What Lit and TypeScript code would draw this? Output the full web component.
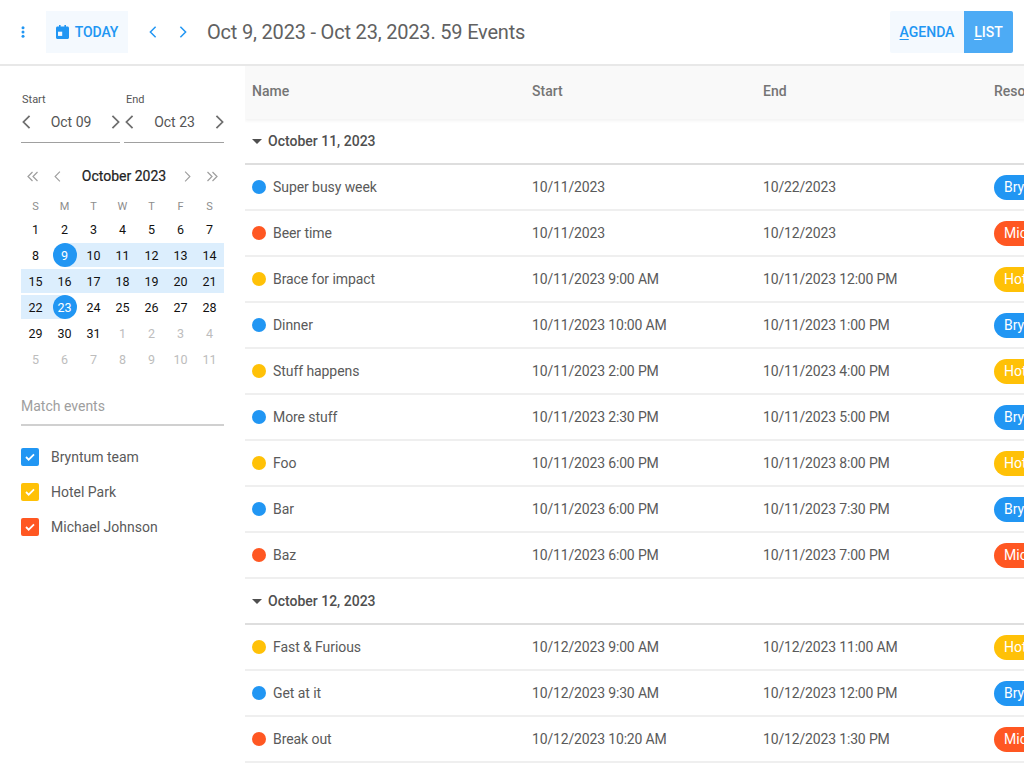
import { LitElement, html, css, unsafeCSS } from 'lit';
import { customElement } from 'lit/decorators.js';

const BLUE = '#2196f3';
const AMBER = '#ffc107';
const ORANGE = '#ff5722';

const calendarWeeks = [
  [1, 2, 3, 4, 5, 6, 7],
  [8, 9, 10, 11, 12, 13, 14],
  [15, 16, 17, 18, 19, 20, 21],
  [22, 23, 24, 25, 26, 27, 28],
  [29, 30, 31, 1, 2, 3, 4],
  [5, 6, 7, 8, 9, 10, 11],
];

const resources = [
  { name: 'Bryntum team', color: BLUE },
  { name: 'Hotel Park', color: AMBER },
  { name: 'Michael Johnson', color: ORANGE },
];

const groups = [
  {
    title: 'October 11, 2023',
    rows: [
      ['Super busy week', '10/11/2023', '10/22/2023', 0],
      ['Beer time', '10/11/2023', '10/12/2023', 2],
      ['Brace for impact', '10/11/2023 9:00 AM', '10/11/2023 12:00 PM', 1],
      ['Dinner', '10/11/2023 10:00 AM', '10/11/2023 1:00 PM', 0],
      ['Stuff happens', '10/11/2023 2:00 PM', '10/11/2023 4:00 PM', 1],
      ['More stuff', '10/11/2023 2:30 PM', '10/11/2023 5:00 PM', 0],
      ['Foo', '10/11/2023 6:00 PM', '10/11/2023 8:00 PM', 1],
      ['Bar', '10/11/2023 6:00 PM', '10/11/2023 7:30 PM', 0],
      ['Baz', '10/11/2023 6:00 PM', '10/11/2023 7:00 PM', 2],
    ],
  },
  {
    title: 'October 12, 2023',
    rows: [
      ['Fast & Furious', '10/12/2023 9:00 AM', '10/12/2023 11:00 AM', 1],
      ['Get at it', '10/12/2023 9:30 AM', '10/12/2023 12:00 PM', 0],
      ['Break out', '10/12/2023 10:20 AM', '10/12/2023 1:30 PM', 2],
    ],
  },
] as { title: string; rows: [string, string, string, number][] }[];

const chevron = (dir: 'left' | 'right', w: number, h: number, color: string, width = 2) => html`
  <svg width=${w} height=${h} viewBox="0 0 10 16" fill="none" stroke=${color} stroke-width=${width}>
    <path d=${dir === 'left' ? 'M8.500 1 1.500 8l7 7' : 'M1.500 1l7 7-7 7'}></path>
  </svg>
`;

const doubleChevron = (dir: 'left' | 'right') => html`
  <svg width="12" height="11" viewBox="0 0 12 11" fill="none" stroke="#9e9e9e" stroke-width="1.200">
    <path d=${dir === 'left' ? 'M5.500 1 1 5.500 5.500 10M10.500 1 6 5.500l4.500 4.500' : 'M1.500 1 6 5.500 1.500 10M6.500 1 11 5.500 6.500 10'}></path>
  </svg>
`;

@customElement('app-root')
export class AppRoot extends LitElement {
  static styles = css`
    :host {
      display: block;
      width: 1024px;
      height: 768px;
      overflow: hidden;
      background: #fff;
      font-family: Roboto, 'Liberation Sans', sans-serif;
      font-size: 14px;
      color: #4f4f4f;
    }

    .toolbar {
      box-sizing: border-box;
      height: 66px;
      display: flex;
      align-items: center;
      padding: 0 11px 0 0;
      border-bottom: 2px solid #e8e8e8;
    }
    .dots {
      width: 46px;
      display: flex;
      justify-content: center;
    }
    .btn {
      box-sizing: border-box;
      height: 42px;
      display: flex;
      align-items: center;
      justify-content: center;
      background: #f4f9fe;
      color: ${unsafeCSS(BLUE)};
      font-weight: 500;
      font-size: 14px;
    }
    .today {
      width: 82px;
      gap: 6px;
      letter-spacing: -0.1px;
    }
    .nav {
      display: flex;
      align-items: center;
      gap: 22px;
      margin-left: 21px;
    }
    .range {
      margin-left: 20px;
      font-size: 20px;
      letter-spacing: -0.19px;
      color: #616161;
    }
    .modes {
      margin-left: auto;
      display: flex;
    }
    .agenda {
      width: 74px;
      border-radius: 2px 0 0 2px;
    }
    .list {
      width: 49px;
      background: #4dabf5;
      color: #fff;
      border-radius: 0 2px 2px 0;
    }
    u {
      text-underline-offset: 2px;
    }

    .body {
      display: flex;
      height: 702px;
    }

    .side {
      box-sizing: border-box;
      width: 245px;
      flex: none;
      padding: 26px 21px 0;
    }
    .dates {
      display: flex;
      gap: 4px;
      width: 203px;
    }
    .date {
      flex: 1;
    }
    .date:first-child {
      flex: 0 0 99px;
    }
    .date label {
      display: block;
      font-size: 11px;
      color: #555;
      height: 14px;
      line-height: 14px;
      margin: 1px 0 0 1px;
    }
    .date:last-child label {
      margin-left: 2px;
    }
    .date-field {
      box-sizing: border-box;
      height: 36px;
      display: flex;
      align-items: center;
      justify-content: space-between;
      border-bottom: 1px solid #a0a0a0;
      font-size: 14px;
      color: #555;
      padding: 0 0 5px 1px;
    }

    .cal-head {
      display: flex;
      align-items: center;
      justify-content: space-between;
      width: 203px;
      height: 20px;
      margin-top: 23px;
      padding: 0 6px;
      box-sizing: border-box;
      color: #222;
      font-size: 14px;
    }
    .cal-title {
      color: #222;
      flex: 1;
      text-align: center;
      padding-left: 3px;
      -webkit-text-stroke: 0.2px #222;
    }
    .cal-arrows {
      display: flex;
      gap: 15px;
      align-items: center;
    }
    .cal {
      display: grid;
      grid-template-columns: repeat(7, 29px);
      grid-template-rows: 20px;
      grid-auto-rows: 26px;
      width: 203px;
      margin-top: 10px;
      font-size: 12.500px;
      color: #111;
    }
    .dow {
      display: flex;
      align-items: center;
      justify-content: center;
      color: #8d8d8d;
      font-size: 11px;
    }
    .day {
      display: flex;
      align-items: center;
      justify-content: center;
      position: relative;
    }
    .day.in::before {
      content: '';
      position: absolute;
      left: 0;
      right: 0;
      top: 1px;
      bottom: 1px;
      background: #dceefd;
    }
    .day.start::before {
      left: 50%;
    }
    .day.end::before {
      right: 50%;
    }
    .day span {
      position: relative;
    }
    .day.sel span {
      width: 24px;
      height: 24px;
      border-radius: 50%;
      background: ${unsafeCSS(BLUE)};
      color: #fff;
      display: flex;
      align-items: center;
      justify-content: center;
    }
    .day.other {
      color: #bdbdbd;
    }

    .filter {
      box-sizing: border-box;
      width: 203px;
      height: 35px;
      margin-top: 19px;
      padding-bottom: 4px;
      border-bottom: 2px solid #d0d0d0;
      color: #9e9e9e;
      display: flex;
      align-items: center;
    }
    .resources {
      margin-top: 22px;
      display: flex;
      flex-direction: column;
      gap: 17px;
    }
    .res {
      display: flex;
      align-items: center;
      height: 18px;
      gap: 12px;
      color: #5a5a5a;
    }
    .check {
      width: 18px;
      height: 18px;
      border-radius: 2px;
      display: flex;
      align-items: center;
      justify-content: center;
    }

    .grid {
      flex: 1;
      min-width: 0;
      overflow: hidden;
    }
    .head {
      box-sizing: border-box;
      height: 53px;
      padding-bottom: 3px;
      display: grid;
      grid-template-columns: 280px 231px 231px 300px;
      align-items: center;
      background: #f9f9f9;
      color: #757575;
      font-weight: 500;
      box-shadow: 0 2px 3px rgba(0, 0, 0, 0.05);
      width: 1042px;
    }
    .head div,
    .row > div {
      padding-left: 7px;
      white-space: nowrap;
    }
    .group {
      box-sizing: border-box;
      height: 46px;
      display: flex;
      align-items: center;
      gap: 6px;
      padding-left: 7px;
      font-weight: 500;
      color: #4f4f4f;
      border-bottom: 2px solid #dedede;
    }
    .caret {
      width: 0;
      height: 0;
      border-left: 5px solid transparent;
      border-right: 5px solid transparent;
      border-top: 5px solid #4f4f4f;
    }
    .row {
      box-sizing: border-box;
      height: 46px;
      display: grid;
      grid-template-columns: 280px 231px 231px 300px;
      align-items: center;
      border-bottom: 2px solid #efefef;
      width: 1042px;
      color: #5a5a5a;
    }
    .row .when {
      letter-spacing: -0.16px;
    }
    .row .name {
      display: flex;
      align-items: center;
      gap: 7px;
      letter-spacing: -0.07px;
    }
    .dot {
      width: 14px;
      height: 14px;
      border-radius: 50%;
    }
    .chip {
      display: inline-block;
      height: 25px;
      line-height: 25px;
      padding: 0 12px 0 10px;
      border-radius: 12.500px;
      color: #fff;
    }
  `;

  renderDay(day: number, week: number) {
    const other = (week === 4 && day < 10) || week === 5;
    const inRange = !other && day >= 9 && day <= 23;
    const start = inRange && day === 9;
    const end = inRange && day === 23;
    const classes = ['day', other ? 'other' : '', inRange ? 'in' : '', start ? 'start' : '', end ? 'end' : '', start || end ? 'sel' : ''].join(' ');
    return html`<div class=${classes}><span>${day}</span></div>`;
  }

  renderDate(label: string, value: string) {
    return html`
      <div class="date">
        <label>${label}</label>
        <div class="date-field">
          ${chevron('left', 9, 14, '#6e6e6e')}
          <span>${value}</span>
          ${chevron('right', 9, 14, '#6e6e6e')}
        </div>
      </div>
    `;
  }

  render() {
    return html`
      <div class="toolbar">
        <div class="dots">
          <svg width="4" height="12" viewBox="0 0 4 12" fill=${BLUE}>
            <circle cx="2" cy="1.700" r="1.500"></circle>
            <circle cx="2" cy="6" r="1.500"></circle>
            <circle cx="2" cy="10.300" r="1.500"></circle>
          </svg>
        </div>
        <div class="btn today">
          <svg width="13" height="14" viewBox="0 0 13 14" fill=${BLUE}>
            <path d="M3 0h1.600v1.600h3.800V0H10v1.600h1.500c.8 0 1.500.7 1.500 1.500v9.400c0 .8-.7 1.500-1.500 1.500h-10C.7 14 0 13.300 0 12.500V3.100C0 2.300.7 1.600 1.500 1.600H3V0Z"></path>
            <rect x="2" y="6.700" width="4.200" height="4.200" fill="#f4f9fe"></rect>
          </svg>
          <span>TODAY</span>
        </div>
        <div class="nav">
          ${chevron('left', 8, 12, BLUE)}
          ${chevron('right', 8, 12, BLUE)}
        </div>
        <div class="range">Oct 9, 2023 - Oct 23, 2023. 59 Events</div>
        <div class="modes">
          <div class="btn agenda"><span><u>A</u>GENDA</span></div>
          <div class="btn list"><span><u>L</u>IST</span></div>
        </div>
      </div>

      <div class="body">
        <div class="side">
          <div class="dates">
            ${this.renderDate('Start', 'Oct 09')}
            ${this.renderDate('End', 'Oct 23')}
          </div>

          <div class="cal-head">
            <div class="cal-arrows">
              ${doubleChevron('left')}
              ${chevron('left', 7, 11, '#9e9e9e', 1.6)}
            </div>
            <div class="cal-title">October 2023</div>
            <div class="cal-arrows">
              ${chevron('right', 7, 11, '#9e9e9e', 1.6)}
              ${doubleChevron('right')}
            </div>
          </div>

          <div class="cal">
            ${['S', 'M', 'T', 'W', 'T', 'F', 'S'].map((d) => html`<div class="dow">${d}</div>`)}
            ${calendarWeeks.map((week, w) => week.map((day) => this.renderDay(day, w)))}
          </div>

          <div class="filter">Match events</div>

          <div class="resources">
            ${resources.map(
              (r) => html`
                <div class="res">
                  <div class="check" style="background:${r.color}">
                    <svg width="10" height="8" viewBox="0 0 11 9" fill="none" stroke="#fff" stroke-width="2">
                      <path d="M1 4.500 4 7.500 10 1.500"></path>
                    </svg>
                  </div>
                  <span>${r.name}</span>
                </div>
              `
            )}
          </div>
        </div>

        <div class="grid">
          <div class="head">
            <div>Name</div>
            <div>Start</div>
            <div>End</div>
            <div>Resource</div>
          </div>
          <div class="rows">
            ${groups.map(
              (g) => html`
                <div class="group"><span class="caret"></span>${g.title}</div>
                ${g.rows.map(
                  ([name, start, end, res]) => html`
                    <div class="row">
                      <div class="name">
                        <span class="dot" style="background:${resources[res].color}"></span>
                        ${name}
                      </div>
                      <div class="when">${start}</div>
                      <div class="when">${end}</div>
                      <div>
                        <span class="chip" style="background:${resources[res].color}">${resources[res].name}</span>
                      </div>
                    </div>
                  `
                )}
              `
            )}
          </div>
        </div>
      </div>
    `;
  }
}
